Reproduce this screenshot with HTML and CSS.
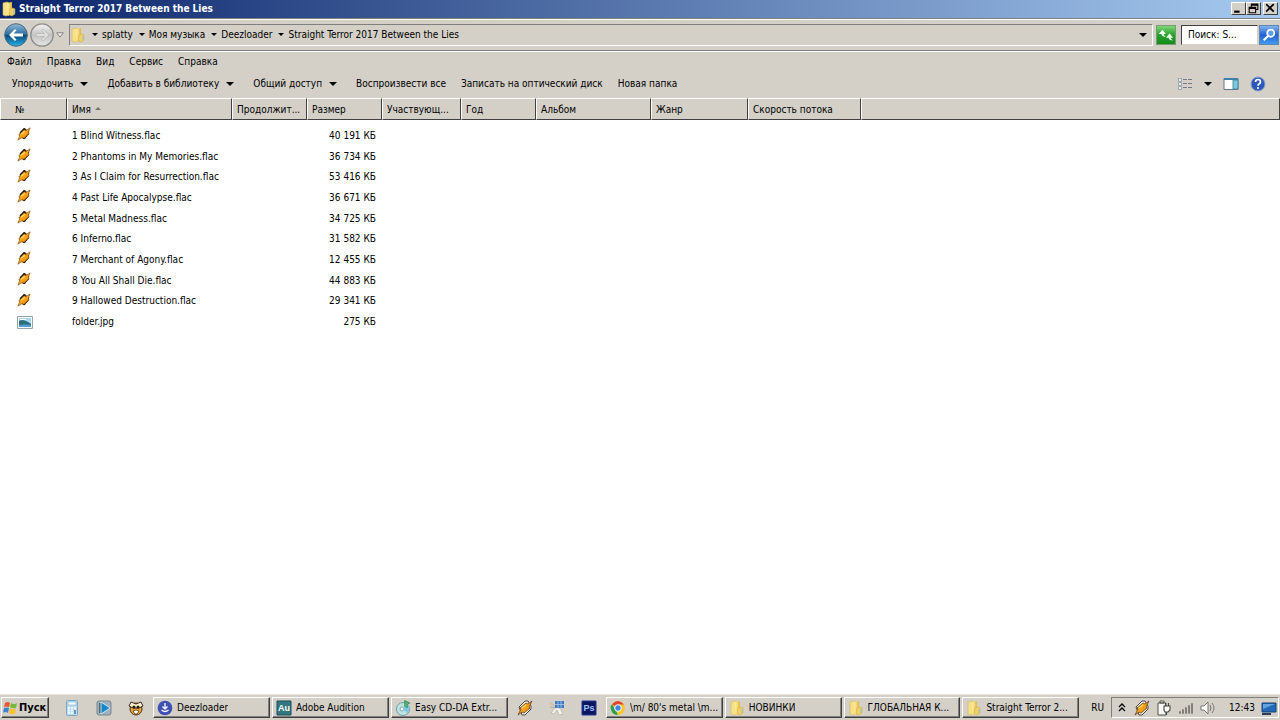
FILE: index.html
```html
<!DOCTYPE html>
<html lang="ru">
<head>
    <meta charset="UTF-8">
    <meta name="viewport" content="width=device-width, initial-scale=1.0">
    <title>Straight Terror 2017 Between the Lies</title>
    <link rel="stylesheet" href="styles.css">
</head>
<body>
    <!-- Shared icons -->
    <svg class="sprite" aria-hidden="true">
        <defs>
            <linearGradient id="gFolder" x1="0" x2="1"><stop offset="0" stop-color="#fff3ae"/><stop offset="1" stop-color="#dfb83d"/></linearGradient>
            <linearGradient id="gBlue" x1="0" y1="0" x2="0" y2="1"><stop offset="0" stop-color="#8fb9d8"/><stop offset=".48" stop-color="#2a6c9f"/><stop offset=".52" stop-color="#0b4a7c"/><stop offset="1" stop-color="#27b4e6"/></linearGradient>
            <linearGradient id="gGray" x1="0" y1="0" x2="0" y2="1"><stop offset="0" stop-color="#f4f4f2"/><stop offset=".5" stop-color="#c3c3c1"/><stop offset="1" stop-color="#e6e6e4"/></linearGradient>
            <linearGradient id="gBolt" x1="0" y1="0" x2="1" y2="1"><stop offset="0" stop-color="#ffc62e"/><stop offset="1" stop-color="#ee7c00"/></linearGradient>
        </defs>
        <symbol id="folder" viewBox="0 0 16 16">
            <path d="M2 2l4-1 2 1v12l-3 1-3-1z" fill="#f6e088" stroke="#d9b755" stroke-width=".6"/>
            <path d="M6 2l5-1v11l-4 3z" fill="url(#gFolder)"/>
            <path d="M9 8l3-1 2 1v5l-3 2-3-1z" fill="#f0d062" stroke="#cfa83c" stroke-width=".5"/>
            <path d="M13 9v4" stroke="#8ec0d8"/>
        </symbol>
        <symbol id="winamp" viewBox="0 0 16 16">
            <path d="M8 1l6 4-5 9-7-5z" fill="#1c1210"/>
            <path d="M3 6l5-5 2 1-6 6zM8 14l6-6-1-2-7 7z" fill="#1c1210"/>
            <path d="M15 1l-2 5 1 1-6 6-2-1-5 3 2-5-1-1 6-6 2 1z" fill="url(#gBolt)" stroke="#6b3604" stroke-width=".6"/>
            <path d="M5 8l4-3" stroke="#ffe37c" stroke-width="1.200"/>
        </symbol>
        <symbol id="bolt" viewBox="0 0 16 16">
            <path d="M2 7l6-6h3l3 5v3l-6 6H5z" fill="#f1eeea" stroke="#4c4640"/>
            <path d="M15 1l-3 6 1 1-6 5-2-1-4 3 3-6-1-1 6-5 2 1z" fill="url(#gBolt)" stroke="#694018" stroke-width=".8"/>
            <path d="M5 8l4-3" stroke="#ffe9a0"/>
        </symbol>
        <symbol id="windows" viewBox="0 0 16 16">
            <path d="M3 3q3-2 5 0L7 7Q4 6 2 7z" fill="#e8572a"/>
            <path d="M9 3q3 2 6 0l-1 5q-3 1-6-1z" fill="#78b93c"/>
            <path d="M2 8q3-1 5 0l-1 5q-3-2-5 0z" fill="#3c83d2"/>
            <path d="M8 8q3 2 6 1l-1 5q-3 1-6-1z" fill="#f7c22f"/>
        </symbol>
    </svg>

    <header class="titlebar">
        <svg class="icon"><use href="#folder"/></svg>
        <h1>Straight Terror 2017 Between the Lies</h1>
        <div class="window-buttons">
            <button aria-label="Свернуть"><svg viewBox="0 0 12 10"><path d="M2 8h5" stroke="#000" stroke-width="2"/></svg></button>
            <button aria-label="Восстановить"><svg viewBox="0 0 12 10"><path d="M4 4V1h6v5H8M4 2h6M2 4h6v5H2zM2 5h6" fill="none" stroke="#000"/></svg></button>
            <button class="close" aria-label="Закрыть"><svg viewBox="0 0 12 10"><path d="M2 1l7 7M9 1L2 8" stroke="#000" stroke-width="1.6"/></svg></button>
        </div>
    </header>

    <nav class="navbar">
        <button class="round" aria-label="Назад">
            <svg viewBox="0 0 24 24"><circle cx="12" cy="12" r="11.3" fill="url(#gBlue)" stroke="#53697a"/><path d="M5 12l6-6 1.500 1.500L9.500 10.500H19v3H9.500l3 3L11 18z" fill="#fff"/></svg>
        </button>
        <button class="round" aria-label="Вперёд">
            <svg viewBox="0 0 24 24"><circle cx="12" cy="12" r="11.2" fill="url(#gGray)" stroke="#8d8d8b" stroke-width="1.3"/><path d="M19 12l-6-6-1.500 1.500 3 3H6v3h8.500l-3 3L13 18z" fill="#dededc" stroke="#b4b4b2" stroke-width=".7"/></svg>
        </button>
        <button class="history" aria-label="Последние страницы"><svg viewBox="0 0 8 6"><path d="M.7.8h6.6L4 5z" fill="#f4f4f2" stroke="#777" stroke-width=".9"/></svg></button>
        <div class="address">
            <svg class="icon"><use href="#folder"/></svg>
            <a href="#"><i class="arrow"></i>splatty</a>
            <a href="#"><i class="arrow"></i>Моя музыка</a>
            <a href="#"><i class="arrow"></i>Deezloader</a>
            <a href="#"><i class="arrow"></i>Straight Terror 2017 Between the Lies</a>
            <button class="drop" aria-label="Предыдущие расположения"><i class="arrow big"></i></button>
        </div>
        <button class="refresh" aria-label="Обновить">
            <svg viewBox="0 0 18 18"><path d="M1 8l4-5 4 5H6.500q0 2 2.500 3-5 0-5-3z" fill="#fff"/><path d="M17 10l-4 5-4-5h2.500q0-2-2.500-3 5 0 5 3z" transform="rotate(180 13 11)" fill="#e8ffe4"/></svg>
        </button>
        <input class="search" type="text" placeholder="Поиск: S..." aria-label="Поиск">
        <button class="find" aria-label="Найти">
            <svg viewBox="0 0 18 18"><circle cx="11" cy="7" r="4" fill="#5fa0ee" stroke="#fff" stroke-width="2"/><path d="M8 10l-5 5" stroke="#fff" stroke-width="2.4"/></svg>
        </button>
    </nav>

    <div class="menu">
        <button>Файл</button>
        <button>Правка</button>
        <button>Вид</button>
        <button>Сервис</button>
        <button>Справка</button>
    </div>

    <div class="toolbar">
        <button class="has-arrow">Упорядочить<i class="arrow big"></i></button>
        <button class="has-arrow">Добавить в библиотеку<i class="arrow big"></i></button>
        <button class="has-arrow">Общий доступ<i class="arrow big"></i></button>
        <button>Воспроизвести все</button>
        <button>Записать на оптический диск</button>
        <button>Новая папка</button>
        <div class="view-buttons">
            <button aria-label="Изменить представление">
                <svg class="icon" viewBox="0 0 16 16"><path d="M1.5 2.5h3v3h-3zM1.5 6.5h3v3h-3zM1.5 10.500h3v3h-3z" fill="#e8edf2" stroke="#8d98a5" stroke-width=".8"/><path d="M6 3.500h4m1 0h4M6 7.500h4m1 0h4M6 11.500h4m1 0h4" stroke="#737982"/></svg>
            </button>
            <button aria-label="Дополнительно"><i class="arrow big"></i></button>
            <button aria-label="Область просмотра">
                <svg class="icon" viewBox="0 0 16 16"><path d="M1 2.500h14v11H1z" fill="#fff" stroke="#63798c"/><path d="M1 3h14" stroke="#3d81ab" stroke-width="2"/><path d="M10 4h5v9h-5z" fill="#7bc7dd" stroke="#36809f" stroke-width=".8"/></svg>
            </button>
            <button aria-label="Справка">
                <svg class="icon" viewBox="0 0 16 16"><circle cx="8" cy="8" r="7" fill="#2c58b8" stroke="#8da0c8"/><path d="M5.500 6q0-2.500 2.500-2.500T10.500 6q0 1-1.500 2-1 .6-1 1.800" fill="none" stroke="#fff" stroke-width="1.700"/><circle cx="8" cy="12" r="1.100" fill="#fff"/></svg>
            </button>
        </div>
    </div>

    <main class="files">
        <table>
            <colgroup>
                <col class="c-num"><col class="c-name"><col class="c-small"><col class="c-small"><col class="c-artist">
                <col class="c-small"><col class="c-album"><col class="c-genre"><col class="c-rate"><col>
            </colgroup>
            <thead>
                <tr>
                    <th class="num">№</th>
                    <th>Имя<svg class="sort" viewBox="0 0 6 4"><path d="M0 4l3-3 3 3z" fill="#77736c"/></svg></th>
                    <th>Продолжит...</th>
                    <th>Размер</th>
                    <th>Участвующ...</th>
                    <th>Год</th>
                    <th>Альбом</th>
                    <th>Жанр</th>
                    <th>Скорость потока</th>
                    <th></th>
                </tr>
            </thead>
            <tbody>
                <tr><td><svg class="file-icon"><use href="#winamp"/></svg></td><td>1 Blind Witness.flac</td><td></td><td class="size">40 191 КБ</td></tr>
                <tr><td><svg class="file-icon"><use href="#winamp"/></svg></td><td>2 Phantoms in My Memories.flac</td><td></td><td class="size">36 734 КБ</td></tr>
                <tr><td><svg class="file-icon"><use href="#winamp"/></svg></td><td>3 As I Claim for Resurrection.flac</td><td></td><td class="size">53 416 КБ</td></tr>
                <tr><td><svg class="file-icon"><use href="#winamp"/></svg></td><td>4 Past Life Apocalypse.flac</td><td></td><td class="size">36 671 КБ</td></tr>
                <tr><td><svg class="file-icon"><use href="#winamp"/></svg></td><td>5 Metal Madness.flac</td><td></td><td class="size">34 725 КБ</td></tr>
                <tr><td><svg class="file-icon"><use href="#winamp"/></svg></td><td>6 Inferno.flac</td><td></td><td class="size">31 582 КБ</td></tr>
                <tr><td><svg class="file-icon"><use href="#winamp"/></svg></td><td>7 Merchant of Agony.flac</td><td></td><td class="size">12 455 КБ</td></tr>
                <tr><td><svg class="file-icon"><use href="#winamp"/></svg></td><td>8 You All Shall Die.flac</td><td></td><td class="size">44 883 КБ</td></tr>
                <tr><td><svg class="file-icon"><use href="#winamp"/></svg></td><td>9 Hallowed Destruction.flac</td><td></td><td class="size">29 341 КБ</td></tr>
                <tr>
                    <td><svg class="file-icon picture" viewBox="0 0 16 14"><path d="M.5 1.500h15v12H.5z" fill="#fff" stroke="#9aa3aa"/><path d="M2 3h12v9H2z" fill="#a5d8f2"/><path d="M2 6q4-3 12 3v2H2z" fill="#2f6f7d"/><path d="M2 10q6-1 12 0v2H2z" fill="#4f9fd0"/><path d="M3 4.500h6" stroke="#fff"/></svg></td>
                    <td>folder.jpg</td><td></td><td class="size">275 КБ</td>
                </tr>
            </tbody>
        </table>
    </main>

    <footer class="taskbar">
        <button class="start"><svg class="icon"><use href="#windows"/></svg>Пуск</button>
        <div class="quick">
            <button aria-label="Калькулятор">
                <svg class="icon" viewBox="0 0 16 16"><rect x="2.500" y=".5" width="11" height="15" rx="1" fill="#b9dcf2" stroke="#7fa6c2"/><path d="M4 2h8v3H4z" fill="#f4fbff" stroke="#75a7c7" stroke-width=".5"/><path d="M4 8h8M4 10.500h8M4 13h8" stroke="#fff" stroke-width="1.500" stroke-dasharray="2 1"/><path d="M10 10h2v4h-2z" fill="#5d9bd0"/></svg>
            </button>
            <button aria-label="Проигрыватель">
                <svg class="icon" viewBox="0 0 16 16"><rect x="1" y="1" width="14" height="14" rx="2" fill="#9fb2bc" stroke="#78878e"/><path d="M3 3h4v10H3z" fill="#53676f"/><path d="M5 2l9 6-9 6z" fill="#1787cc" stroke="#dff4ff" stroke-width=".8"/></svg>
            </button>
            <button aria-label="The Bat!">
                <svg class="icon" viewBox="0 0 16 16"><circle cx="8" cy="9" r="6" fill="#e6a638" stroke="#4e3210"/><path d="M1 6l2-4 5 2 5-2 2 4-4 2H5z" fill="#fff0cf" stroke="#33261a"/><circle cx="6" cy="7" r="1.500" fill="#271a12"/><circle cx="10" cy="7" r="1.500" fill="#271a12"/><path d="M5 11q3-2 6 0l-2 3H7z" fill="#fff" stroke="#593516" stroke-width=".8"/></svg>
            </button>
        </div>
        <div class="tasks">
            <button>
                <svg class="icon" viewBox="0 0 16 16"><circle cx="8" cy="8" r="7.300" fill="#3e50b4"/><path d="M8 3v5M5.500 6.500L8 9l2.500-2.500M4.500 10q3.500 3 7 0" fill="none" stroke="#fff" stroke-width="1.300"/></svg>
                <span>Deezloader</span>
            </button>
            <button>
                <svg class="icon" viewBox="0 0 16 16"><path d="M1 1h14v14H1z" fill="#327780" stroke="#17515a"/><text class="logo-text" x="8" y="11" text-anchor="middle">Au</text></svg>
                <span>Adobe Audition</span>
            </button>
            <button>
                <svg class="icon" viewBox="0 0 16 16"><circle cx="8" cy="9" r="6.500" fill="#bfe3e4" stroke="#6e9ea4"/><path d="M8 9l5-5q4 5-1 9z" fill="#7fc7e6"/><circle cx="7" cy="9" r="2" fill="#fff" stroke="#73a9ad"/><path d="M10 7V1l4 2-2 1v4" fill="none" stroke="#3a9b5c" stroke-width="1.500"/></svg>
                <span>Easy CD-DA Extr...</span>
            </button>
        </div>
        <div class="quick">
            <button aria-label="Winamp"><svg class="icon"><use href="#bolt"/></svg></button>
            <button aria-label="Настройка">
                <svg class="icon" viewBox="0 0 16 16"><path d="M1 7l5 1-4 5 3 1 3-4 2 5 4-1-3-6z" fill="#f4f0ea" stroke="#b5aea5" stroke-width=".7"/><path d="M1 3l5 3" stroke="#d3bfa5" stroke-width="2"/><path d="M6 1h9v7H6z" fill="#4377c0"/><path d="M6 4.500h9M9 1v7M12 1v7" stroke="#a9cbef" stroke-width=".8"/></svg>
            </button>
            <button aria-label="Photoshop">
                <svg class="icon" viewBox="0 0 16 16"><path d="M1 1h14v14H1z" fill="#0b1564" stroke="#26368e"/><text class="logo-text ps" x="8" y="11" text-anchor="middle">Ps</text></svg>
            </button>
        </div>
        <div class="tasks">
            <button>
                <svg class="icon" viewBox="0 0 16 16"><circle cx="8" cy="8" r="7" fill="#f5c72c"/><path d="M8 8L2 4.300Q5 1 8 1t6 3.500H8z" fill="#df4435"/><path d="M2 4.300L6 11l2 4Q3 15 1.300 10.500T2 4.300z" fill="#2ca04d"/><circle cx="8" cy="8" r="3.300" fill="#4286ed" stroke="#fff"/></svg>
                <span>\m/ 80's metal \m...</span>
            </button>
            <button><svg class="icon"><use href="#folder"/></svg><span>НОВИНКИ</span></button>
            <button><svg class="icon"><use href="#folder"/></svg><span>ГЛОБАЛЬНАЯ К...</span></button>
            <button><svg class="icon"><use href="#folder"/></svg><span>Straight Terror 2...</span></button>
        </div>
        <span class="lang">RU</span>
        <div class="tray">
            <svg class="chevron" viewBox="0 0 8 10"><path d="M1 4l3-3 3 3M1 8l3-3 3 3" fill="none" stroke="#000" stroke-width="1.300"/></svg>
            <svg class="icon"><use href="#bolt"/></svg>
            <svg class="icon" viewBox="0 0 16 16"><path d="M2 3h8v12H2zM4 1h4v2H4z" fill="#f8f8f6" stroke="#53534f"/><path d="M8 6h6v4l-2 2H9l-1-2zM9.500 6V3M12.500 6V3M10.500 12v3" fill="#fff" stroke="#44443f" stroke-width="1.100"/></svg>
            <svg class="icon" viewBox="0 0 16 16"><path d="M1.500 11.500h1v2h-1zM4.500 9.500h1v4h-1zM7.500 7.500h1v6h-1zM10.500 5.500h1v8h-1zM13.500 3.500h1v10h-1z" fill="#fff" stroke="#77746e" stroke-width=".9"/></svg>
            <svg class="icon" viewBox="0 0 16 16"><path d="M1 6h3l4-4v12l-4-4H1z" fill="#fff" stroke="#77746e"/><path d="M10 5q2 3 0 6M12 3q4 5 0 10" fill="none" stroke="#77746e"/></svg>
            <time>12:43</time>
            <svg class="icon" viewBox="0 0 16 16"><path d="M1 3h14v9H1z" fill="#2368b9" stroke="#174275"/><path d="M2 4h12L2 9z" fill="#63a4df"/><path d="M1 13h9v2H1z" fill="#2b4058"/></svg>
        </div>
    </footer>
</body>
</html>
```
FILE: styles.css
```css
* {
    margin: 0;
    padding: 0;
    box-sizing: border-box;
}

body {
    min-height: 100vh;
    display: flex;
    flex-direction: column;
    background: #fff;
    color: #000;
    font: 10px/14px "DejaVu Sans Condensed", "Noto Sans", sans-serif;
}

button,
input {
    font: inherit;
    color: inherit;
    border: 0;
    background: none;
    white-space: nowrap;
}

a {
    color: inherit;
    text-decoration: none;
}

svg {
    display: block;
    flex: none;
}

.sprite {
    position: absolute;
    width: 0;
    height: 0;
}

.icon {
    width: 16px;
    height: 16px;
}

/* Small black triangle */
.arrow {
    display: block;
    flex: none;
    border: solid transparent;
    border-width: 3px 3px 0;
    border-top-color: #000;
}

.arrow.big {
    border-width: 4px 4px 0;
}

/* Title bar */
.titlebar {
    height: 18px;
    flex: none;
    display: flex;
    align-items: center;
    gap: 2px;
    padding: 0 2px 1px 1px;
    background: linear-gradient(90deg, #0a246a, #a6caf0);
    color: #fff;
}

.titlebar h1 {
    flex: 1;
    font-size: 10px;
}

.window-buttons {
    display: flex;
}

.window-buttons button {
    width: 15px;
    height: 13px;
    background: #d4d0c8;
    border: 1px solid;
    border-color: #fff #404040 #404040 #fff;
}

.window-buttons .close {
    margin-left: 2px;
}

/* Navigation */
.navbar {
    height: 33px;
    flex: none;
    display: flex;
    align-items: center;
    padding: 0 1px 0 4px;
    background: #d4d0c8;
    border-top: 1px solid #808080;
    border-bottom: 1px solid #808080;
    box-shadow: inset 0 1px #fff, 0 1px #fff;
}

.round {
    width: 24px;
    height: 24px;
    margin-right: 2px;
}

.history {
    width: 8px;
    margin-right: 5px;
}

.address {
    flex: 1;
    min-width: 0;
    height: 22px;
    display: flex;
    align-items: center;
    gap: 6px;
    border: 1px solid;
    border-color: #808080 #fff #fff #808080;
}

.address a {
    display: flex;
    align-items: center;
    gap: 4px;
    white-space: nowrap;
}

.drop {
    margin-left: auto;
    padding: 5px;
}

.refresh,
.find {
    width: 20px;
    height: 20px;
    margin-left: 3px;
    padding: 1px;
    background: linear-gradient(#7fd67a, #29a02c 50%, #138c1c);
    border: 1px solid #7a9a78;
}

.find {
    margin-left: 1px;
    background: linear-gradient(#7fb4f2, #2460d0 50%, #3f9cf0);
    border-color: #5d85b8;
}

.search {
    width: 77px;
    height: 20px;
    margin-left: 5px;
    padding: 0 6px;
    background: #fff;
    border: 1px solid;
    border-color: #404040 #d4d0c8 #d4d0c8 #404040;
}

.search::placeholder {
    color: #000;
    opacity: 1;
}

/* Menu and commands */
.menu,
.toolbar {
    flex: none;
    display: flex;
    align-items: center;
    gap: 15px;
    background: #d4d0c8;
}

.menu {
    height: 20px;
    margin-top: 1px;
    padding-left: 7px;
}

.toolbar {
    height: 26px;
    padding: 0 14px 2px 12px;
}

.has-arrow {
    display: flex;
    align-items: center;
    gap: 7px;
    margin-right: 4px;
}

.view-buttons {
    display: flex;
    align-items: center;
    gap: 11px;
    margin-left: auto;
}

/* File list */
.files {
    flex: 1;
}

table {
    width: 100%;
    table-layout: fixed;
    border-collapse: separate;
    border-spacing: 0;
}

.c-num { width: 67px; }
.c-name { width: 165px; }
.c-small { width: 75px; }
.c-artist { width: 79px; }
.c-album { width: 115px; }
.c-genre { width: 97px; }
.c-rate { width: 113px; }

th {
    height: 22px;
    padding: 2px 0 0 4px;
    background: #d4d0c8;
    border: 1px solid;
    border-color: #fff #404040 #404040 #fff;
    font-weight: normal;
    text-align: left;
    white-space: nowrap;
}

th.num {
    padding-left: 14px;
}

.sort {
    display: inline-block;
    width: 6px;
    height: 4px;
    margin-left: 4px;
    vertical-align: 3px;
}

tbody::before {
    content: "";
    display: block;
    height: 5px;
}

tbody tr {
    height: 21px;
}

tbody tr:nth-child(3n) {
    height: 20px;
}

td {
    padding-left: 5px;
    white-space: nowrap;
}

td.size {
    padding: 0 6px 0 0;
    text-align: right;
}

.file-icon {
    width: 14px;
    height: 14px;
    margin: 0 0 3px 12px;
}

.file-icon.picture {
    width: 16px;
    margin-bottom: 0;
}

/* Taskbar */
.taskbar {
    height: 26px;
    flex: none;
    display: flex;
    align-items: center;
    padding: 0 1px;
    background: #d4d0c8;
    border-top: 1px solid #e8e6e0;
}

.start,
.tasks button {
    height: 21px;
    display: flex;
    align-items: center;
    background: #d4d0c8;
    border: 1px solid;
    border-color: #fff #404040 #404040 #fff;
    box-shadow: inset -1px -1px #808080;
}

.start {
    width: 48px;
    gap: 1px;
    font-size: 11px;
    font-weight: bold;
}

.quick {
    display: flex;
    gap: 16px;
    padding: 0 9px;
}

.start + .quick {
    padding-left: 15px;
}

.tasks {
    flex: 3 1 0;
    min-width: 0;
    display: flex;
    gap: 2px;
}

.tasks + .quick ~ .tasks {
    flex-grow: 4;
}

.tasks button {
    flex: 1 1 0;
    min-width: 0;
    gap: 4px;
    padding-left: 3px;
}

.tasks span {
    overflow: hidden;
}

.logo-text {
    font: bold 9px "Liberation Sans", sans-serif;
    fill: #fff;
}

.logo-text.ps {
    fill: #9fc4f5;
}

.lang {
    margin: 0 7px 0 12px;
}

.tray {
    height: 21px;
    display: flex;
    align-items: center;
    gap: 6px;
    padding: 0 1px 0 6px;
    border: 1px solid;
    border-color: #808080 #fff #fff #808080;
}

.tray time {
    margin: 0 0 0 7px;
}

.chevron {
    width: 8px;
    height: 10px;
    margin-right: 2px;
}
```
